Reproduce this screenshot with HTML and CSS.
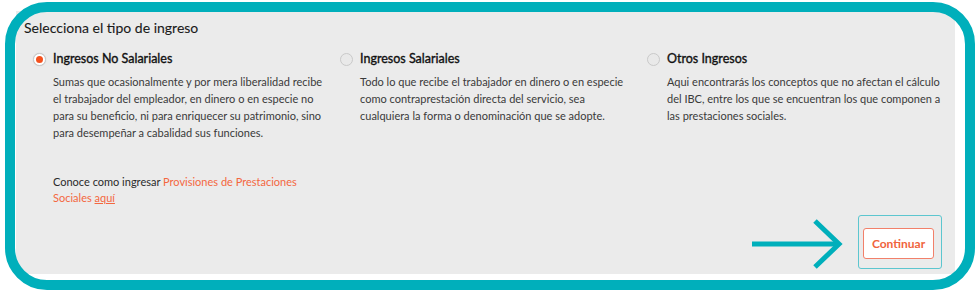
FILE: index.html
```html
<!DOCTYPE html>
<html lang="es">

<head>
    <meta charset="UTF-8">
    <title>Tipo de ingreso</title>
    <link rel="stylesheet" href="styles.css">
</head>

<body>
    <div class="panel">
        <h2 class="title">Selecciona el tipo de ingreso</h2>
        <div class="options">
            <div class="option">
                <label class="option-head">
                    <span class="radio checked"></span>
                    <span class="option-name">Ingresos No Salariales</span>
                </label>
                <p class="option-desc">Sumas que ocasionalmente y por mera liberalidad recibe el trabajador del empleador, en dinero o en especie no para su beneficio, ni para enriquecer su patrimonio, sino para desempeñar a cabalidad sus funciones.</p>
                <p class="option-desc help">Conoce como ingresar <span class="accent">Provisiones de Prestaciones Sociales</span> <a class="accent link" href="#">aquí</a></p>
            </div>
            <div class="option">
                <label class="option-head">
                    <span class="radio"></span>
                    <span class="option-name">Ingresos Salariales</span>
                </label>
                <p class="option-desc">Todo lo que recibe el trabajador en dinero o en especie como contraprestación directa del servicio, sea cualquiera la forma o denominación que se adopte.</p>
            </div>
            <div class="option">
                <label class="option-head">
                    <span class="radio"></span>
                    <span class="option-name">Otros Ingresos</span>
                </label>
                <p class="option-desc wide">Aqui encontrarás los conceptos que no afectan el cálculo del IBC, entre los que se encuentran los que componen a las prestaciones sociales.</p>
            </div>
        </div>
        <div class="footer">
            <button class="btn" type="button">Continuar</button>
        </div>

        <!-- marcas de la guia -->
        <div class="mark-box"></div>
        <svg class="mark-arrow" width="92" height="52" viewBox="0 0 92 52">
            <path d="M0 26 H86" stroke="#00afbb" stroke-width="5" fill="none" />
            <path d="M63 3 L87 26 L63 49" stroke="#00afbb" stroke-width="5" fill="none" />
        </svg>
    </div>
    <div class="frame"></div>
</body>

</html>
```

FILE: styles.css
```css
* {
    padding: 0;
    margin: 0;
    box-sizing: border-box;
}

body {
    position: relative;
    width: 978px;
    height: 294px;
    background: #fff;
    font-family: Lato, "Liberation Sans", sans-serif;
    color: #333;
}

.panel {
    position: relative;
    display: flex;
    flex-direction: column;
    margin: 11px 0 0 16px;
    padding: 7px 21px 15px 0;
    width: 939px;
    height: 263px;
    background: #ebebeb;
}

.title {
    padding-left: 8px;
    font-size: 14px;
    line-height: 20px;
    font-weight: 400;
    color: #1a1a1a;
    -webkit-text-stroke: 0.1px #1a1a1a;
}

.options {
    display: grid;
    grid-template-columns: repeat(3, 307px);
    margin-top: 12px;
    padding-left: 17px;
}

.option-head {
    display: flex;
    align-items: center;
    gap: 7px;
    height: 18px;
    cursor: pointer;
}

.radio {
    width: 13px;
    height: 13px;
    border: 1px solid #c9c9c9;
    border-radius: 50%;
    background: #e9e9e9;
}

.radio.checked {
    display: flex;
    align-items: center;
    justify-content: center;
    background: #fff;
    box-shadow: 0 0 1px rgba(0, 0, 0, 0.2);
}

.radio.checked::after {
    content: "";
    width: 7px;
    height: 7px;
    border-radius: 50%;
    background: #f4511e;
}

.option-name {
    font-size: 12.5px;
    line-height: 18px;
    font-weight: 400;
    color: #111;
    -webkit-text-stroke: 0.35px #111;
}

.option-desc {
    margin: 5px 0 0 20px;
    width: 272px;
    font-size: 11px;
    line-height: 17px;
    color: #3a3a3a;
}

.option-desc.wide {
    width: 282px;
}

.option-desc.help {
    margin-top: 33px;
    line-height: 16px;
    color: #2a2a2a;
}

.accent {
    color: #f4673f;
}

.link {
    text-decoration: underline;
}

.footer {
    display: flex;
    justify-content: flex-end;
    margin-top: auto;
}

.btn {
    width: 71px;
    height: 31px;
    border: 1px solid #f2806a;
    border-radius: 3px;
    background: #fff;
    font-family: Lato, "Liberation Sans", sans-serif;
    font-size: 12px;
    font-weight: 700;
    color: #f0643c;
    cursor: pointer;
}

.mark-box {
    position: absolute;
    left: 842px;
    top: 204px;
    width: 84px;
    height: 54px;
    border: 1px solid #5cc6cf;
    border-radius: 3px;
}

.mark-arrow {
    position: absolute;
    left: 736px;
    top: 207px;
}

.frame {
    position: absolute;
    left: 5px;
    top: 2px;
    width: 970px;
    height: 288px;
    border: 10px solid #00afbb;
    border-radius: 42px;
    pointer-events: none;
}
```
